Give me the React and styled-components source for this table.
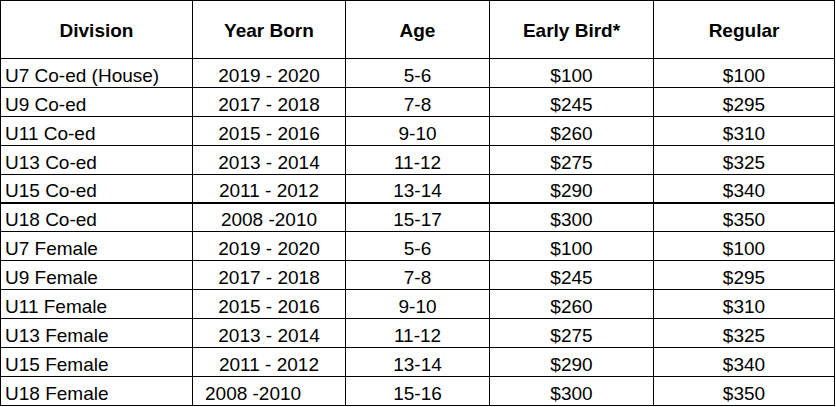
import React from "react";
import styled, { createGlobalStyle } from "styled-components";

const GlobalStyle = createGlobalStyle`
  html, body {
    margin: 0;
    padding: 0;
    background: #ffffff;
  }
  body {
    font-family: "Liberation Sans", Arial, sans-serif;
    color: #000000;
  }
`;

const divisions = [
  { name: "U7 Co-ed (House)", born: "2019 - 2020", age: "5-6", early: "$100", regular: "$100" },
  { name: "U9 Co-ed", born: "2017 - 2018", age: "7-8", early: "$245", regular: "$295" },
  { name: "U11 Co-ed", born: "2015 - 2016", age: "9-10", early: "$260", regular: "$310" },
  { name: "U13 Co-ed", born: "2013 - 2014", age: "11-12", early: "$275", regular: "$325" },
  { name: "U15 Co-ed", born: "2011 - 2012", age: "13-14", early: "$290", regular: "$340", thick: true },
  { name: "U18 Co-ed", born: "2008 -2010", age: "15-17", early: "$300", regular: "$350", short: true },
  { name: "U7 Female", born: "2019 - 2020", age: "5-6", early: "$100", regular: "$100" },
  { name: "U9 Female", born: "2017 - 2018", age: "7-8", early: "$245", regular: "$295" },
  { name: "U11 Female", born: "2015 - 2016", age: "9-10", early: "$260", regular: "$310" },
  { name: "U13 Female", born: "2013 - 2014", age: "11-12", early: "$275", regular: "$325" },
  { name: "U15 Female", born: "2011 - 2012", age: "13-14", early: "$290", regular: "$340" },
  { name: "U18 Female", born: "2008 -2010", age: "15-16", early: "$300", regular: "$350", bornLeft: true },
];

const headers = ["Division", "Year Born", "Age", "Early Bird*", "Regular"];

const App = () => {
  return (
    <>
      <GlobalStyle />
      <StTable>
        {headers.map((title) => (
          <StHeadCell key={title}>{title}</StHeadCell>
        ))}
        {divisions.map((row) => (
          <React.Fragment key={row.name}>
            <StCell $align="left" $thick={row.thick} $short={row.short}>
              {row.name}
            </StCell>
            <StCell
              $align={row.bornLeft ? "left" : "center"}
              $indent={row.bornLeft ? 12 : 4}
              $thick={row.thick}
              $short={row.short}
            >
              {row.born}
            </StCell>
            <StCell $thick={row.thick} $short={row.short}>
              {row.age}
            </StCell>
            <StCell $thick={row.thick} $short={row.short}>
              {row.early}
            </StCell>
            <StCell $thick={row.thick} $short={row.short}>
              {row.regular}
            </StCell>
          </React.Fragment>
        ))}
      </StTable>
    </>
  );
};

export default App;

const StTable = styled.div`
  display: grid;
  grid-template-columns: 192px 153px 144px 164px 181px;
  width: max-content;
  border-top: 1px solid #000;
  border-left: 1px solid #000;
  font-size: 19px;
`;

const StHeadCell = styled.div`
  box-sizing: border-box;
  height: 58px;
  display: flex;
  align-items: center;
  justify-content: center;
  padding-top: 3px;
  font-weight: 700;
  border-right: 1px solid #000;
  border-bottom: 1px solid #000;
  white-space: nowrap;
`;

const StCell = styled.div`
  box-sizing: border-box;
  height: ${(props) => (props.$short ? 28 : 29)}px;
  display: flex;
  align-items: flex-end;
  justify-content: ${(props) =>
    props.$align === "left" ? "flex-start" : "center"};
  padding-left: ${(props) =>
    props.$align === "left" ? `${props.$indent || 4}px` : "0"};
  line-height: 22px;
  border-right: 1px solid #000;
  border-bottom: ${(props) => (props.$thick ? 2 : 1)}px solid #000;
  white-space: nowrap;
`;
